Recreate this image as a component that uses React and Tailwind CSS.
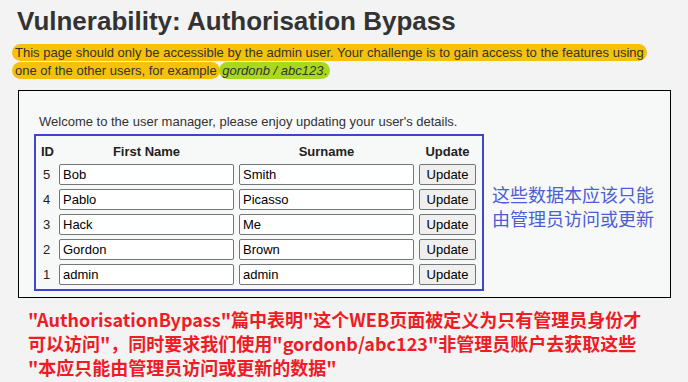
import React from "react";

const users = [
  { id: 5, first: "Bob", last: "Smith" },
  { id: 4, first: "Pablo", last: "Picasso" },
  { id: 3, first: "Hack", last: "Me" },
  { id: 2, first: "Gordon", last: "Brown" },
  { id: 1, first: "admin", last: "admin" },
];

export default function App() {
  return (
    <div className="min-h-screen w-[688px] h-[382px] overflow-hidden bg-[#f3f3f3] font-['Liberation_Sans',Arial,sans-serif]">
      {/* Title */}
      <h1 className="pt-[6px] pl-[17px] text-[26px] leading-[30px] font-bold text-[#333]">
        Vulnerability: Authorisation Bypass
      </h1>

      {/* Challenge text */}
      <p className="mt-[8px] pl-[15px] pr-[30px] text-[13px] leading-[18px] text-[#333]">
        <span className="bg-[#f6c109] rounded-full px-[3px] -ml-[3px] py-[1px] [box-decoration-break:clone] [-webkit-box-decoration-break:clone]">
          This page should only be accessible by the admin user. Your challenge is to gain access to the features using
          <br />
          one of the other users, for example
        </span>{" "}
        <span className="bg-[#a9d81c] rounded-full px-[3px] -ml-[4px] py-[1px]">
          <em>gordonb / abc123</em>.
        </span>
      </p>

      {/* User manager box */}
      <div className="mt-[10px] ml-[18px] w-[653px] h-[208px] border border-black bg-[#f7f8f8] pl-[15px] pt-[23px]">
        <p className="ml-[5px] text-[13px] leading-[15px] text-[#333]">
          Welcome to the user manager, please enjoy updating your user's details.
        </p>
        <div className="mt-[5px] flex items-start">
          <div className="border-2 border-[#3b46c9] pl-[5px] pr-[6px] pt-[6px] pb-[4px]">
            <div className="grid grid-cols-[13px_175px_175px_57px] gap-x-[5px] text-[13px] text-[#222]">
              <div className="h-[20px] mb-[2px] flex items-center font-bold">ID</div>
              <div className="h-[20px] mb-[2px] flex items-center justify-center font-bold">First Name</div>
              <div className="h-[20px] mb-[2px] flex items-center justify-center font-bold">Surname</div>
              <div className="h-[20px] mb-[2px] flex items-center justify-center font-bold">Update</div>
              {users.map((u, i) => (
                <React.Fragment key={u.id}>
                  <div className={`h-[21px] flex items-center pl-[2px] ${i < 4 ? "mb-[4px]" : ""}`}>{u.id}</div>
                  <input
                    defaultValue={u.first}
                    className={`h-[21px] w-[175px] bg-white border border-[#767676] rounded-[2px] px-[3px] text-[13px] text-black outline-none ${i < 4 ? "mb-[4px]" : ""}`}
                  />
                  <input
                    defaultValue={u.last}
                    className={`h-[21px] w-[175px] bg-white border border-[#767676] rounded-[2px] px-[3px] text-[13px] text-black outline-none ${i < 4 ? "mb-[4px]" : ""}`}
                  />
                  <button
                    className={`h-[21px] w-[57px] bg-[#efefef] border border-[#767676] rounded-[2px] text-[13px] text-black ${i < 4 ? "mb-[4px]" : ""}`}
                  >
                    Update
                  </button>
                </React.Fragment>
              ))}
            </div>
          </div>
          <p className="ml-[8px] mt-[48px] whitespace-nowrap text-[18px] leading-[24px] text-[#4c5ed4] font-['Noto_Sans_CJK_SC',sans-serif]">
            这些数据本应该只能
            <br />
            由管理员访问或更新
          </p>
        </div>
      </div>

      {/* Annotation */}
      <p className="mt-[9px] ml-[28px] whitespace-nowrap text-[18px] leading-[24px] font-bold text-[#ee1c25] font-['Noto_Sans_CJK_SC',sans-serif]">
        "AuthorisationBypass"篇中表明"这个WEB页面被定义为只有管理员身份才
        <br />
        可以访问"，同时要求我们使用"gordonb/abc123"非管理员账户去获取这些
        <br />
        "本应只能由管理员访问或更新的数据"
      </p>
    </div>
  );
}
